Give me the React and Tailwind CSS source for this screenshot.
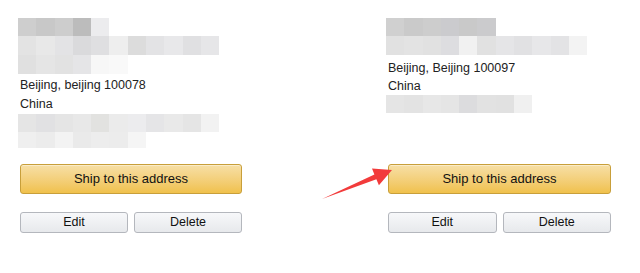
const font = { fontFamily: '"Liberation Sans", Arial, sans-serif' };

// mosaic rows (blurred personal info), one color per 18px block
const leftRows = [
  { h: 'h-[18px]', cells: ['#cecece', '#c8c8c8', '#cdcdcd', '#bcbcbc', '#ececee'] },
  { h: 'h-[19px]', cells: ['#e3e3e3', '#e8e8e8', '#e3e3e5', '#dadadc', '#dfdfe1', '#eeeeee', '#dcdcdc', '#e3e3e5', '#e8e8ea', '#e0e0e2', '#e6e6e8'] },
  { h: 'h-[19px]', cells: ['#e0e0e0', '#e5e5e5', '#e2e2e2', '#e5e5e7', '#f7f7f7', '#f9f9f9'] },
];
const leftRowsBottom = [
  { h: 'h-[18px]', cells: ['#e5e5e5', '#e1e1e3', '#e5e5e5', '#e8e8e8', '#e2e2e0', '#ebebeb', '#ececee', '#e5e5e7', '#e9e9e9', '#e5e5e5', '#f2f2f2'] },
  { h: 'h-[16px]', cells: ['#efefef', '#ececec', '#f3f3f3', '#eaeaea', '#ededed', '#ececec', '#f5f5f5'] },
];
const rightRows = [
  { h: 'h-[18px]', cells: ['#d0d0d0', '#cacaca', '#cdcdcd', '#cbcbce', '#c9c9c9', '#cbcbcd'] },
  { h: 'h-[19px]', cells: ['#e1e1e1', '#e3e3e3', '#e1e1e1', '#dddde0', '#f1f1f1', '#e1e1e1', '#e5e5e7', '#e1e1e3', '#e7e7e9', '#e3e3e5', '#f3f3f3'] },
];
const rightRowsBottom = [
  { h: 'h-[18px]', cells: ['#e5e5e5', '#e3e3e3', '#e7e7e7', '#e5e5e5', '#dcdcde', '#e2e2e2', '#e1e1e1', '#f0f0f0'] },
];

function Mosaic({ rows }) {
  return (
    <div className="flex flex-col -ml-[2px] blur-[0.6px]">
      {rows.map((r, i) => (
        <div key={i} className={`flex ${r.h}`}>
          {r.cells.map((c, j) => (
            <div key={j} className="w-[18.3px] h-full" style={{ backgroundColor: c }} />
          ))}
        </div>
      ))}
    </div>
  );
}

function Buttons() {
  return (
    <div className="flex flex-col">
      <button className="h-[30px] w-full rounded-[3px] border border-[#c89f3a] bg-gradient-to-b from-[#f7dfa5] to-[#f0c14b] text-[13px] text-[#111] shadow-[inset_0_1px_0_rgba(255,255,255,0.4)]">
        Ship to this address
      </button>
      <div className="mt-[18px] flex gap-[6px]">
        <button className="h-[21px] flex-1 rounded-[3px] border border-[#b4b7bd] bg-gradient-to-b from-[#f7f8fa] to-[#e7e9ec] text-[12.5px] text-[#111]">
          Edit
        </button>
        <button className="h-[21px] flex-1 rounded-[3px] border border-[#b4b7bd] bg-gradient-to-b from-[#f7f8fa] to-[#e7e9ec] text-[12.5px] text-[#111]">
          Delete
        </button>
      </div>
    </div>
  );
}

export default function App() {
  return (
    <div className="relative w-[640px] h-[273px] overflow-hidden bg-white" style={font}>
      <div className="flex pt-[18px]">
        {/* left address */}
        <div className="ml-[20px] w-[222px]">
          <div className="h-[146px]">
            <Mosaic rows={leftRows} />
            <div className="mt-[2px] text-[12.5px] leading-[19px] text-[#222]">
              <div>Beijing, beijing 100078</div>
              <div>China</div>
            </div>
            <Mosaic rows={leftRowsBottom} />
          </div>
          <Buttons />
        </div>

        {/* right address */}
        <div className="ml-[146px] w-[223px]">
          <div className="h-[146px]">
            <Mosaic rows={rightRows} />
            <div className="mt-[4px] text-[12.5px] leading-[18px] text-[#222]">
              <div>Beijing, Beijing 100097</div>
              <div>China</div>
            </div>
            <Mosaic rows={rightRowsBottom} />
          </div>
          <Buttons />
        </div>
      </div>

      {/* red arrow pointing at the button */}
      <svg className="absolute left-0 top-0" width="640" height="273" viewBox="0 0 640 273">
        <polygon
          points="322,199 376.4,179.2 378.9,185.2 392,170 372,168.6 374.4,174.6"
          fill="#f23b3b"
        />
      </svg>
    </div>
  );
}
